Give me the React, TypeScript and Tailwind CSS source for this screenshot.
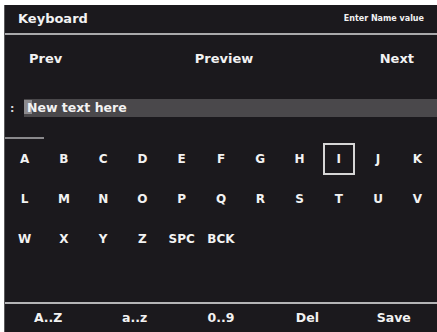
import React from "react";

// 화면 키 배열: 11열 그리드에 순서대로 배치
const ROWS = [
  ["A", "B", "C", "D", "E", "F", "G", "H", "I", "J", "K"],
  ["L", "M", "N", "O", "P", "Q", "R", "S", "T", "U", "V"],
  ["W", "X", "Y", "Z", "SPC", "BCK"],
];

const MODES = ["A..Z", "a..z", "0..9", "Del", "Save"];

const font = "font-['DejaVu_Sans',Verdana,sans-serif]";

export default function App() {
  return (
    <div className={`h-[332px] w-[437px] bg-white pl-[4px] pt-[5px] ${font}`}>
      <div className="flex h-full flex-col border-l border-[#5a5a5c] bg-[#1b191d] text-[#f2f2f2]">
        {/* 상단 타이틀 */}
        <div className="flex h-[28px] items-center justify-between pl-[13px] pr-[13px]">
          <span className="text-[13px] font-bold">Keyboard</span>
          <span className="text-[8px] font-bold">Enter Name value</span>
        </div>
        <div className="h-[2px] bg-[#a9a9ab]" />

        {/* 네비게이션 */}
        <div className="flex h-[48px] items-center justify-between pl-[24px] pr-[23px] text-[13px] font-bold">
          <span>Prev</span>
          <span className="pl-[6px]">Preview</span>
          <span>Next</span>
        </div>

        {/* 입력 줄 */}
        <div className="mt-[16px] flex h-[18px] items-center">
          <span className="w-[19px] pl-[5px] text-[11px] font-bold leading-none text-[#d8d8d8]">:</span>
          <div className="flex h-full flex-1 items-center bg-[#4a484b]">
            <span className="relative pl-[3px] text-[12.5px] font-bold">
              <span className="absolute left-0 top-[1px] h-[14px] w-[8px] bg-[#8c8a8d]" />
              <span className="relative">New text here</span>
            </span>
          </div>
        </div>
        <div className="mt-[20px] h-[2px] w-[39px] bg-[#8a898c]" />

        {/* 키 그리드 */}
        <div className="grid grid-cols-11 auto-rows-[40px] text-[12px] font-bold">
          {ROWS.map((row) =>
            row.map((k) => (
              <div key={k} className="flex items-center justify-center">
                {k === "I" ? (
                  <span className="flex h-[32px] w-[32px] items-center justify-center border-2 border-[#d6d6d6]">
                    {k}
                  </span>
                ) : (
                  <span>{k}</span>
                )}
              </div>
            ))
          )}
        </div>

        <div className="flex-1" />
        <div className="h-[2px] bg-[#b4b4b6]" />

        {/* 하단 모드 */}
        <div className="grid h-[28px] grid-cols-5 items-center text-[12.5px] font-bold">
          {MODES.map((m) => (
            <span key={m} className="text-center">
              {m}
            </span>
          ))}
        </div>
      </div>
    </div>
  );
}
